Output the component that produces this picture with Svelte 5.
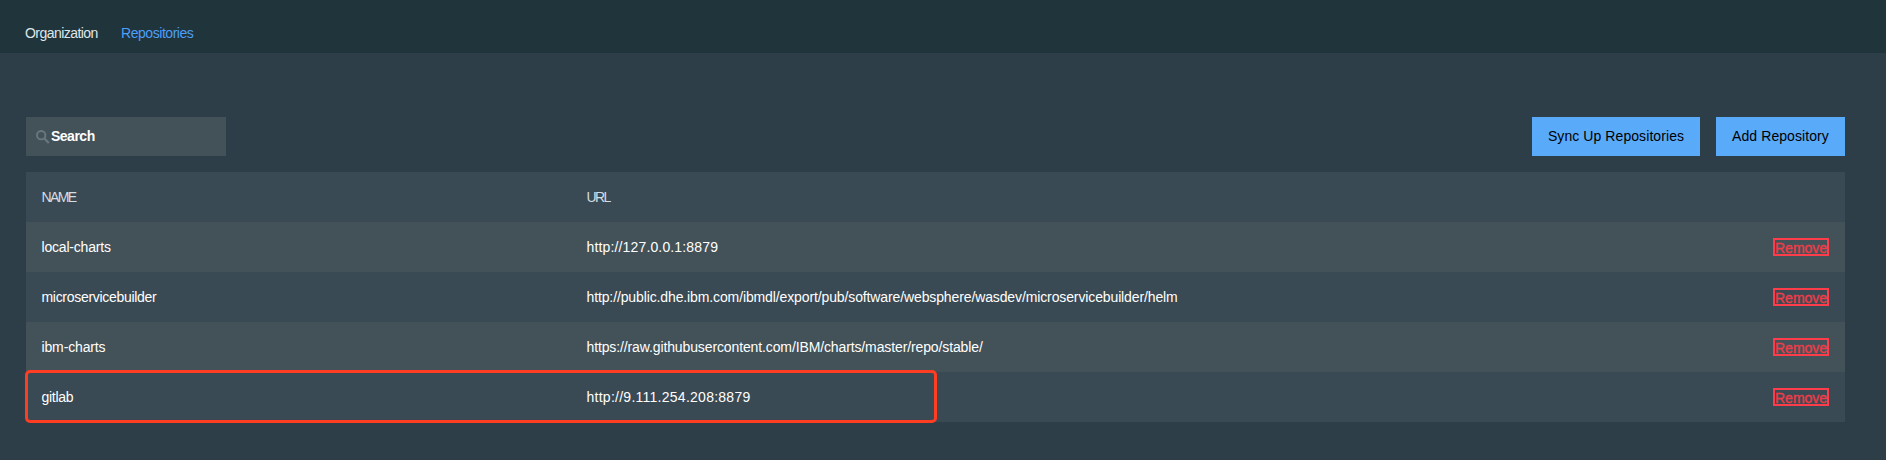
<script>
  const rows = [
    { name: 'local-charts', url: 'http://127.0.0.1:8879', tracking: [-0.2, 0.15] },
    { name: 'microservicebuilder', url: 'http://public.dhe.ibm.com/ibmdl/export/pub/software/websphere/wasdev/microservicebuilder/helm', tracking: [-0.3, -0.12] },
    { name: 'ibm-charts', url: 'https://raw.githubusercontent.com/IBM/charts/master/repo/stable/', tracking: [-0.14, -0.12] },
    { name: 'gitlab', url: 'http://9.111.254.208:8879', tracking: [-0.3, 0.26], highlighted: true }
  ];
</script>

<div class="page">
  <nav>
    <a class="tab" href="#organization">Organization</a>
    <a class="tab active" href="#repositories">Repositories</a>
  </nav>
  <main>
    <div class="toolbar">
      <div class="search">
        <svg width="14" height="14" viewBox="0 0 14 14" fill="none" stroke="#6a777f">
          <circle cx="5.2" cy="5.2" r="4.2" stroke-width="1.9" />
          <path d="M8.4 8.4 12.8 12.9" stroke-width="2.2" />
        </svg>
        <span>Search</span>
      </div>
      <div class="actions">
        <button class="sync">Sync Up Repositories</button>
        <button class="add">Add Repository</button>
      </div>
    </div>
    <div class="table">
      <div class="row head"><span>NAME</span><span>URL</span></div>
      {#each rows as row}
        <div class="row" class:highlighted={row.highlighted}>
          <span style:letter-spacing="{row.tracking[0]}px">{row.name}</span>
          <span style:letter-spacing="{row.tracking[1]}px">{row.url}</span>
          <button class="remove">Remove</button>
        </div>
      {/each}
    </div>
  </main>
</div>

<style>
  :global(body) { background: #2d3e48; }
  .page {
    display: flex; flex-direction: column; box-sizing: border-box; height: 460px;
    background: #2d3e48; color: #fff; overflow: hidden;
    font: 14px/20px "Liberation Sans", Arial, sans-serif; letter-spacing: -0.5px;
  }
  nav { display: flex; gap: 24px; height: 53px; padding: 23px 25px 0; box-sizing: border-box; background: #20343c; flex: none; }
  .tab { color: #dfe6e9; text-decoration: none; width: 72px; letter-spacing: -0.55px; }
  .tab.active { color: #4d9ff7; letter-spacing: -0.45px; }
  main { flex: 1; padding: 64px 41px 0 26px; }
  .toolbar { display: flex; justify-content: space-between; height: 39px; margin-bottom: 16px; }
  .search { display: flex; align-items: center; box-sizing: border-box; width: 200px; padding: 0 10px; gap: 1px; background: #435259; font-weight: bold; }
  .search span { padding-bottom: 2px; }
  .actions { display: flex; gap: 16px; }
  button { border: 0; padding: 0; font: inherit; letter-spacing: 0; white-space: nowrap; }
  .sync, .add { background: #5aaafa; color: #000; padding-bottom: 2px; letter-spacing: 0.08px; }
  .sync { width: 168px; }
  .add { width: 129px; }
  .row { position: relative; display: grid; grid-template-columns: 545px 1fr auto; align-items: center; height: 50px; padding: 0 16px 0 15.5px; background: #3a4a54; }
  .row:nth-child(even) { background: #435259; }
  .head { color: #d4dde1; letter-spacing: -1.6px; }
  .remove { box-sizing: border-box; width: 56px; height: 18px; border: 2px solid #ff3c49; background: none; color: #ee3c49; line-height: 16px; letter-spacing: 0; text-align: left; -webkit-text-stroke: 0.35px #ee3c49; }
  .highlighted::after { content: ""; position: absolute; left: -1px; top: -2px; width: 912px; height: 53px; box-sizing: border-box; border: 3px solid #ff3d23; border-radius: 5px; }
</style>
